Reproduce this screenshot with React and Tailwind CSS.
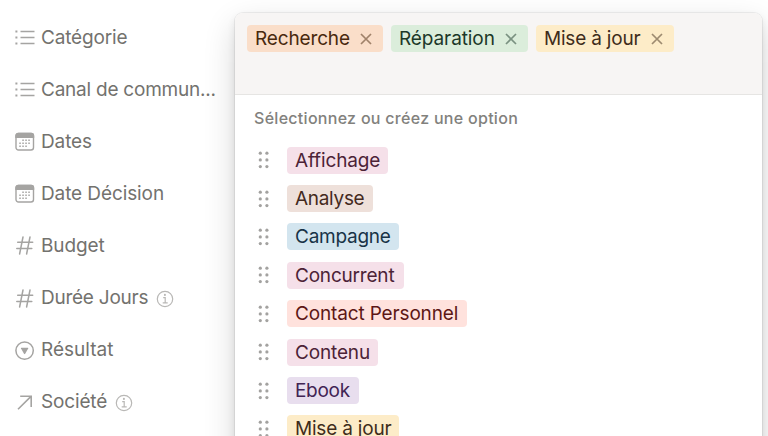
import clsx from 'clsx';

const properties = [
  { name: 'Catégorie', icon: ListIcon, tracking: 'tracking-[-0.17px]' },
  { name: 'Canal de commun...', icon: ListIcon, tracking: 'tracking-[-0.23px]' },
  { name: 'Dates', icon: CalendarIcon, tracking: 'tracking-[-0.1px]' },
  { name: 'Date Décision', icon: CalendarIcon, tracking: 'tracking-[-0.1px]' },
  { name: 'Budget', icon: HashIcon, tracking: 'tracking-[-0.1px]' },
  { name: 'Durée Jours', icon: HashIcon, tracking: 'tracking-[-0.25px]', info: true },
  { name: 'Résultat', icon: SelectIcon, tracking: 'tracking-[0px]' },
  { name: 'Société', icon: ArrowIcon, tracking: 'tracking-[-0.15px]', info: true },
];

const selected = [
  { name: 'Recherche', color: 'bg-[#fadec9] text-[#49290e]', width: 'w-[136px]', tracking: 'tracking-[-0.15px]' },
  { name: 'Réparation', color: 'bg-[#dbeddb] text-[#1c3829]', width: 'w-[137px]', tracking: 'tracking-[-0.1px]' },
  { name: 'Mise à jour', color: 'bg-[#fdecc8] text-[#402c1b]', width: 'w-[138px]', tracking: 'tracking-[-0.2px]' },
];

const options = [
  { name: 'Affichage', color: 'bg-[#f5e0e9] text-[#4c2337]', width: 'w-[101px]', tracking: 'tracking-[-0.15px]' },
  { name: 'Analyse', color: 'bg-[#eee0da] text-[#442a1e]', width: 'w-[86px]', tracking: 'tracking-[-0.3px]' },
  { name: 'Campagne', color: 'bg-[#d3e5ef] text-[#183347]', width: 'w-[112px]', tracking: 'tracking-[-0.25px]' },
  { name: 'Concurrent', color: 'bg-[#f5e0e9] text-[#4c2337]', width: 'w-[117px]', tracking: 'tracking-[-0.2px]' },
  { name: 'Contact Personnel', color: 'bg-[#ffe2dd] text-[#5d1715]', width: 'w-[180px]', tracking: 'tracking-[-0.15px]' },
  { name: 'Contenu', color: 'bg-[#f5e0e9] text-[#4c2337]', width: 'w-[91px]', tracking: 'tracking-[-0.15px]' },
  { name: 'Ebook', color: 'bg-[#e8deee] text-[#412454]', width: 'w-[72px]', tracking: 'tracking-[-0.3px]' },
  { name: 'Mise à jour', color: 'bg-[#fdecc8] text-[#402c1b]', width: 'w-[112px]', tracking: 'tracking-[-0.2px]' },
];

function ListIcon() {
  return (
    <svg width="20" height="20" viewBox="0 0 20 20" fill="none" stroke="#a5a4a2" strokeWidth="1.3">
      <path d="M5.5 3.500h14M5.5 9.500h14M5.5 15.500h14" />
      <path d="M.4 3.500h2M.4 9.500h2M.4 15.500h2" strokeWidth="1.8" />
    </svg>
  );
}

function CalendarIcon() {
  return (
    <svg width="20" height="20" viewBox="0 0 20 20">
      <rect x="1" y="1.500" width="17.500" height="16.500" rx="2.500" fill="none" stroke="#a5a4a2" strokeWidth="1.400" />
      <path d="M.3 6V3.800a3 3 0 0 1 3-3h12.900a3 3 0 0 1 3 3V6Z" fill="#a5a4a2" />
      <path
        d="M7.300 8.300h8.800M4.300 11.300h11.800M4.300 14.300h8.800"
        fill="none"
        stroke="#a5a4a2"
        strokeWidth="1.500"
        strokeDasharray="1.500 1.500"
      />
    </svg>
  );
}

function HashIcon() {
  return (
    <svg width="20" height="20" viewBox="0 0 20 20" fill="none" stroke="#a5a4a2" strokeWidth="1.5" strokeLinecap="round">
      <path d="M8 1 4.600 18M15 1l-3.400 17M2.700 6.300h15M1.800 12.500h15" />
    </svg>
  );
}

function SelectIcon() {
  return (
    <svg width="20" height="20" viewBox="0 0 20 20" fill="none">
      <circle cx="9.600" cy="9.600" r="8.700" stroke="#a5a4a2" strokeWidth="1.500" />
      <path d="M6.400 6.800h6.400q.8 0 .4.700l-3 5.200q-.6.900-1.200 0L6 7.500q-.4-.7.400-.7Z" fill="#a5a4a2" />
    </svg>
  );
}

function ArrowIcon() {
  return (
    <svg width="20" height="20" viewBox="0 0 20 20" fill="none" stroke="#a5a4a2" strokeWidth="1.600">
      <path d="M5.200 3.200h11V14M16 3.400 3 16.300" />
    </svg>
  );
}

function InfoIcon() {
  return (
    <svg width="18" height="18" viewBox="0 0 18 18" fill="none" stroke="#b9b8b6" strokeWidth="1.200">
      <circle cx="9" cy="9" r="7.700" />
      <path d="M7.200 7.600h2v5.200M6.700 12.900h5" />
      <circle cx="8.900" cy="4.900" r="1.050" fill="#b9b8b6" stroke="none" />
    </svg>
  );
}

function CloseIcon() {
  return (
    <svg width="12" height="12" viewBox="0 0 12 12" fill="none" stroke="currentColor" strokeWidth="1.700" className="shrink-0 opacity-50">
      <path d="m1 1 10 10M11 1 1 11" />
    </svg>
  );
}

function DragHandle() {
  return (
    <svg width="12" height="18" viewBox="0 0 12 18" fill="#a3a2a0" className="shrink-0">
      {[2.2, 8.9, 15.6].map((y) => (
        <g key={y}>
          <circle cx="2.300" cy={y} r="1.600" />
          <circle cx="8.900" cy={y} r="1.600" />
        </g>
      ))}
    </svg>
  );
}

function Tag({ name, color, width, tracking, removable }) {
  return (
    <span
      className={clsx(
        'flex h-[27px] shrink-0 items-center justify-between rounded-[4px] px-2 text-[19px] leading-[27px] whitespace-nowrap',
        color,
        width,
        tracking,
      )}
    >
      {name}
      {removable && (
        <span className="flex pr-[3px]">
          <CloseIcon />
        </span>
      )}
    </span>
  );
}

export default function App() {
  return (
    <div className="flex h-[436px] w-[768px] overflow-hidden bg-white font-['Inter',sans-serif]">
      <aside className="flex w-[235px] shrink-0 flex-col pt-[12px] pl-[15px]">
        {properties.map(({ name, icon: Icon, tracking, info }) => (
          <div key={name} className="flex h-[52.1px] shrink-0 items-center text-[19px] whitespace-nowrap text-[#73726e]">
            <Icon />
            <span className={clsx('ml-[6px]', tracking)}>{name}</span>
            {info && (
              <span className="ml-2">
                <InfoIcon />
              </span>
            )}
          </div>
        ))}
      </aside>

      <section className="mt-[13px] h-[480px] w-[527px] shrink-0 overflow-hidden rounded-[8px] bg-white shadow-[0_0_0_1px_rgba(15,15,15,0.06),0_4px_8px_rgba(15,15,15,0.09),0_12px_32px_rgba(15,15,15,0.16)]">
        <div className="flex h-[82px] gap-2 border-b border-[#e6e5e3] bg-[#f7f5f4] pt-3 pl-3">
          {selected.map((tag) => (
            <Tag key={tag.name} {...tag} removable />
          ))}
        </div>
        <p className="mt-[11px] pl-[19px] text-[16px] leading-6 font-medium tracking-[0.29px] text-[#82817d]">Sélectionnez ou créez une option</p>
        <ul className="mt-[11px]">
          {options.map((option) => (
            <li key={option.name} className="flex h-[38.4px] items-center gap-[17px] pl-[23px]">
              <DragHandle />
              <Tag {...option} />
            </li>
          ))}
        </ul>
      </section>
    </div>
  );
}
